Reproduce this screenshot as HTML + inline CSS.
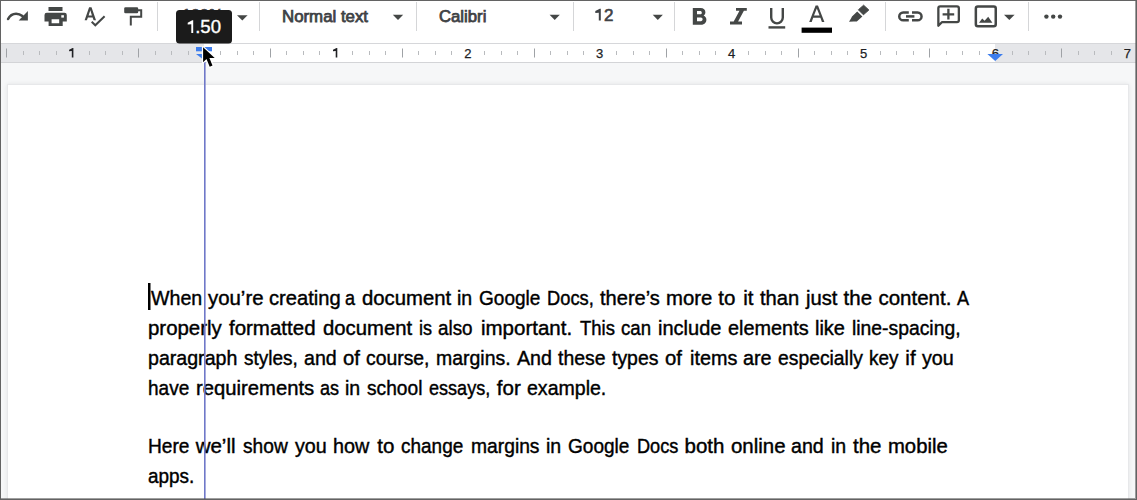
<!DOCTYPE html>
<html><head><meta charset="utf-8">
<style>
html,body{margin:0;padding:0;width:1137px;height:500px;overflow:hidden;background:#fff;}
body{position:relative;font-family:"Liberation Sans",sans-serif;}
.abs{position:absolute;}
#toolbar{left:0;top:0;width:1137px;height:43px;background:#fff;}
#ruler{left:0;top:43px;width:1137px;height:20px;background:#fff;border-top:1px solid #d6d7da;border-bottom:1px solid #d3d4d7;box-sizing:border-box;}
#canvas{left:0;top:63px;width:1137px;height:437px;background:#f6f7f8;}
#page{left:8px;top:85px;width:1120px;height:440px;background:#fff;box-shadow:0 0 0 1px #e7e8ea,0 0 4px 1px rgba(60,64,67,.10);}
.sep{position:absolute;top:2px;width:1px;height:29px;background:#d5d6d8;}
.tb{position:absolute;color:#444746;font-weight:normal;font-size:16px;white-space:nowrap;line-height:1;transform-origin:0 0;-webkit-text-stroke:0.75px #3f4245;color:#3f4245;}
.ln{position:absolute;left:148px;font-size:20.5px;color:#000;white-space:nowrap;line-height:1;transform-origin:0 0;-webkit-text-stroke:0.42px #000;}
.rn{position:absolute;font-size:12px;font-weight:bold;color:#3c4043;line-height:1;transform:translateX(-50%);}
#frame{left:0;top:0;width:1137px;height:500px;box-sizing:border-box;border:1px solid #636363;pointer-events:none;box-shadow:inset -1px -1px 0 rgba(80,80,80,.55);}
</style></head><body>
<div id="toolbar" class="abs"></div>
<div id="ruler" class="abs">
  <div class="abs" style="left:0;top:0;width:204px;height:18px;background:#e5e6e9"></div>
  <div class="abs" style="left:995px;top:0;width:142px;height:18px;background:#e5e6e9"></div>
</div>
<div id="canvas" class="abs"></div>
<div id="page" class="abs"></div>

<!-- separators -->
<div class="sep" style="left:157px"></div>
<div class="sep" style="left:259px"></div>
<div class="sep" style="left:416px"></div>
<div class="sep" style="left:573px"></div>
<div class="sep" style="left:674px"></div>
<div class="sep" style="left:885px"></div>
<div class="sep" style="left:1028px"></div>

<!-- toolbar text -->
<div class="tb" style="left:182px;top:8px">100%</div>
<div class="tb" style="left:282.2px;top:9px;transform:scaleX(1.052)">Normal text</div>
<div class="tb" style="left:438.6px;top:9px;transform:scaleX(1.045)">Calibri</div>


<!-- document text -->
<div class="ln" style="left:150.50px;top:288px;transform:scaleX(0.9575)">When</div>
<div class="ln" style="left:208.41px;top:288px;transform:scaleX(0.9944)">you’re</div>
<div class="ln" style="left:269.39px;top:288px;transform:scaleX(0.9829)">creating</div>
<div class="ln" style="left:345.49px;top:288px;transform:scaleX(0.8800)">a</div>
<div class="ln" style="left:361.80px;top:288px;transform:scaleX(0.9904)">document</div>
<div class="ln" style="left:457.42px;top:288px;transform:scaleX(0.9532)">in</div>
<div class="ln" style="left:478.90px;top:288px;transform:scaleX(0.9280)">Google</div>
<div class="ln" style="left:547.05px;top:288px;transform:scaleX(0.8921)">Docs,</div>
<div class="ln" style="left:599.68px;top:288px;transform:scaleX(0.9796)">there’s</div>
<div class="ln" style="left:666.13px;top:288px;transform:scaleX(0.9914)">more</div>
<div class="ln" style="left:718.35px;top:288px;transform:scaleX(1.0000)">to</div>
<div class="ln" style="left:743.16px;top:288px;transform:scaleX(1.0000)">it</div>
<div class="ln" style="left:760.10px;top:288px;transform:scaleX(0.9832)">than</div>
<div class="ln" style="left:805.58px;top:288px;transform:scaleX(0.9864)">just</div>
<div class="ln" style="left:843.58px;top:288px;transform:scaleX(1.0000)">the</div>
<div class="ln" style="left:878.47px;top:288px;transform:scaleX(1.0000)">content.</div>
<div class="ln" style="left:957.14px;top:288px;transform:scaleX(0.8827)">A</div>
<div class="ln" style="left:147.80px;top:318px;transform:scaleX(0.9962)">properly</div>
<div class="ln" style="left:228.95px;top:318px;transform:scaleX(1.0000)">formatted</div>
<div class="ln" style="left:323.18px;top:318px;transform:scaleX(0.9904)">document</div>
<div class="ln" style="left:419.42px;top:318px;transform:scaleX(0.8800)">is</div>
<div class="ln" style="left:438.43px;top:318px;transform:scaleX(0.9193)">also</div>
<div class="ln" style="left:480.96px;top:318px;transform:scaleX(1.0000)">important.</div>
<div class="ln" style="left:579.80px;top:318px;transform:scaleX(0.9022)">This</div>
<div class="ln" style="left:621.07px;top:318px;transform:scaleX(0.9088)">can</div>
<div class="ln" style="left:658.27px;top:318px;transform:scaleX(0.9763)">include</div>
<div class="ln" style="left:727.68px;top:318px;transform:scaleX(0.9688)">elements</div>
<div class="ln" style="left:815.43px;top:318px;transform:scaleX(0.9740)">like</div>
<div class="ln" style="left:852.01px;top:318px;transform:scaleX(0.9429)">line-spacing,</div>
<div class="ln" style="left:147.84px;top:348px;transform:scaleX(0.9557)">paragraph</div>
<div class="ln" style="left:243.87px;top:348px;transform:scaleX(0.9257)">styles,</div>
<div class="ln" style="left:303.66px;top:348px;transform:scaleX(0.9558)">and</div>
<div class="ln" style="left:342.63px;top:348px;transform:scaleX(0.9913)">of</div>
<div class="ln" style="left:366.47px;top:348px;transform:scaleX(0.9445)">course,</div>
<div class="ln" style="left:436.48px;top:348px;transform:scaleX(0.9490)">margins.</div>
<div class="ln" style="left:517.06px;top:348px;transform:scaleX(0.9579)">And</div>
<div class="ln" style="left:558.23px;top:348px;transform:scaleX(0.9479)">these</div>
<div class="ln" style="left:612.43px;top:348px;transform:scaleX(0.9476)">types</div>
<div class="ln" style="left:665.44px;top:348px;transform:scaleX(0.9913)">of</div>
<div class="ln" style="left:689.63px;top:348px;transform:scaleX(0.9662)">items</div>
<div class="ln" style="left:743.37px;top:348px;transform:scaleX(0.9652)">are</div>
<div class="ln" style="left:777.99px;top:348px;transform:scaleX(0.9425)">especially</div>
<div class="ln" style="left:869.36px;top:348px;transform:scaleX(0.9237)">key</div>
<div class="ln" style="left:905.37px;top:348px;transform:scaleX(1.0000)">if</div>
<div class="ln" style="left:922.40px;top:348px;transform:scaleX(0.9624)">you</div>
<div class="ln" style="left:147.87px;top:378px;transform:scaleX(0.9282)">have</div>
<div class="ln" style="left:195.69px;top:378px;transform:scaleX(0.9882)">requirements</div>
<div class="ln" style="left:319.57px;top:378px;transform:scaleX(0.8800)">as</div>
<div class="ln" style="left:344.83px;top:378px;transform:scaleX(0.9532)">in</div>
<div class="ln" style="left:367.21px;top:378px;transform:scaleX(0.9347)">school</div>
<div class="ln" style="left:428.92px;top:378px;transform:scaleX(0.8809)">essays,</div>
<div class="ln" style="left:496.86px;top:378px;transform:scaleX(1.0000)">for</div>
<div class="ln" style="left:527.32px;top:378px;transform:scaleX(0.9534)">example.</div>
<div class="ln" style="left:147.77px;top:436px;transform:scaleX(0.9323)">Here</div>
<div class="ln" style="left:195.63px;top:436px;transform:scaleX(1.0000)">we’ll</div>
<div class="ln" style="left:242.87px;top:436px;transform:scaleX(0.9343)">show</div>
<div class="ln" style="left:294.62px;top:436px;transform:scaleX(0.9624)">you</div>
<div class="ln" style="left:333.35px;top:436px;transform:scaleX(0.9649)">how</div>
<div class="ln" style="left:377.21px;top:436px;transform:scaleX(1.0000)">to</div>
<div class="ln" style="left:401.44px;top:436px;transform:scaleX(0.9262)">change</div>
<div class="ln" style="left:470.62px;top:436px;transform:scaleX(0.9395)">margins</div>
<div class="ln" style="left:546.25px;top:436px;transform:scaleX(0.9533)">in</div>
<div class="ln" style="left:568.10px;top:436px;transform:scaleX(0.9280)">Google</div>
<div class="ln" style="left:636.63px;top:436px;transform:scaleX(0.8860)">Docs</div>
<div class="ln" style="left:684.55px;top:436px;transform:scaleX(1.0000)">both</div>
<div class="ln" style="left:731.13px;top:436px;transform:scaleX(0.9967)">online</div>
<div class="ln" style="left:791.42px;top:436px;transform:scaleX(0.9558)">and</div>
<div class="ln" style="left:830.86px;top:436px;transform:scaleX(0.9533)">in</div>
<div class="ln" style="left:853.01px;top:436px;transform:scaleX(1.0000)">the</div>
<div class="ln" style="left:888.23px;top:436px;transform:scaleX(0.9879)">mobile</div>
<div class="ln" style="left:147.68px;top:466px;transform:scaleX(0.9233)">apps.</div>

<svg class="abs" style="left:0;top:0" width="1137" height="500" viewBox="0 0 1137 500">
<g fill="#444746">
<!-- redo -->
<path d="M8.1 19C9.7 15.7 12.7 13.7 16.1 13.7C18.5 13.7 20.5 14.5 22.4 16" fill="none" stroke="#444746" stroke-width="2.6" stroke-linecap="round"/><path d="M27.9 11.1V20.4H18.7Z"/>
<!-- print -->
<rect x="48.5" y="7" width="14" height="4"/>
<path fill-rule="evenodd" d="M44.5 15a2.3 2.3 0 0 1 2.3-2.3h17.7a2.3 2.3 0 0 1 2.3 2.3V21.6h-4.1V26h-14.1V21.6h-4.1zM51.6 19.2h7.6v4h-7.6z"/>
<rect x="61.3" y="15.2" width="2.6" height="2.4" fill="#fff"/>
<!-- paint format -->
<rect x="124.2" y="7.2" width="14" height="6" rx="1.3"/>
</g>
<g fill="none" stroke="#444746" stroke-width="2">
<!-- spellcheck -->
<path fill="#444746" stroke="none" fill-rule="evenodd" d="M84.6 20.2L89.1 7.2H91.5L96 20.2H93.6L92.6 17.5H87.9L86.9 20.2ZM88.6 15.4H91.9L90.3 10.3Z"/>
<path d="M91.7 21.8L95.3 25.3L104.6 16.2"/>
<!-- paint handle -->
<path d="M138 10.2H141.2V16.8H130.8V25.6"/>
<!-- underline U -->
<path d="M771.2 8V17.6A5.8 5.8 0 0 0 782.8 17.6V8" stroke-width="2.4"/>
<!-- text color A -->
<path fill="#444746" stroke="none" fill-rule="evenodd" d="M809.2 22L815.6 5.6H818L824.4 22H821.9L820.4 17.8H813.2L811.7 22ZM814 15.6H819.6L816.8 8.4Z"/>
<!-- link -->
<path d="M908.8 12.45H903.2a3.95 3.95 0 0 0 0 7.9H908.8" stroke-width="2.5"/>
<path d="M912 12.45H917.6a3.95 3.95 0 0 1 0 7.9H912" stroke-width="2.5"/>
<path d="M906 16.4H914.4" stroke-width="2.5"/>
<!-- comment -->
<path d="M938.35 25.8V8.2a1.85 1.85 0 0 1 1.85-1.85H957a1.85 1.85 0 0 1 1.85 1.85V20.2a1.85 1.85 0 0 1-1.85 1.85H942.1Z" stroke-width="2.3" stroke-linejoin="round"/>
<path d="M948.4 8.8V19.6M942.6 14.3H954.2" stroke-width="2.3"/>
<!-- image -->
<rect x="975.85" y="6.45" width="19.9" height="19.9" rx="2" stroke-width="2.5"/>
</g>
<g fill="#444746">
<!-- dropdown arrows -->
<path d="M237 15.3H247.6L242.3 20.5z"/>
<path d="M392.8 14.8H403.2L398 20z"/>
<path d="M549.6 14.8H559.8L554.7 20z"/>
<path d="M652.7 14.8H662.9L657.8 20z"/>
<path d="M1004 14.8H1014.6L1009.3 20z"/>
<!-- bold -->
<path fill-rule="evenodd" d="M692.8 8H700.6C703.6 8 705.4 9.9 705.4 12.2C705.4 13.6 704.7 14.8 703.6 15.6C705.3 16.3 706.4 17.9 706.4 19.8C706.4 22.6 704.3 24.8 701.2 24.8H692.8ZM697 11.1H700.2C701.1 11.1 701.8 11.8 701.8 12.7C701.8 13.6 701.1 14.3 700.2 14.3H697ZM697 17.5H700.9C701.9 17.5 702.6 18.3 702.6 19.35C702.6 20.4 701.9 21.2 700.9 21.2H697Z"/>
<!-- italic -->
<path d="M736 8H746.8V10.8H743.9L738.1 21.6H742V24.4H730V21.6H733.7L739.5 10.8H736Z"/>
<!-- underline bar -->
<rect x="768.5" y="26.2" width="16.7" height="2.4"/>
<!-- highlighter -->
<path d="M863.6 5.2L868.8 10L863.4 14.8L858.4 9.8Z" stroke="#444746" stroke-width="1" stroke-linejoin="round"/>
<path d="M857.2 11.4L862.4 16.4L856.8 21.4L853.6 21.6L849 21.8L851 18.6L852 16.6Z"/>
<!-- comment tail fill -->
<!-- image mountains -->
<path d="M979 22.8L982.2 18.4L984.6 20.8L988.2 16.8L992.4 22.8Z"/>
<!-- more dots -->
<circle cx="1046.4" cy="16.6" r="2.2"/>
<circle cx="1053.2" cy="16.6" r="2.2"/>
<circle cx="1060" cy="16.6" r="2.2"/>
</g>
<rect x="801.6" y="27.6" width="30.4" height="5.2" fill="#000"/>
<path d="M600.80 8.7V20.6H598.80V12.81L595.30 13.00V11.10L599.80 8.7Z" fill="#3f4245"/><text x="613.4" y="20.6" text-anchor="end" font-family="Liberation Sans" font-size="17" fill="#3f4245" stroke="#3f4245" stroke-width="0.6">2</text>
<!-- ruler -->
<rect x="6" y="48.5" width="1" height="9" fill="#9fa2a6"/>
<rect x="23" y="51" width="1" height="4" fill="#b9bbbe"/>
<rect x="39" y="51" width="1" height="4" fill="#b9bbbe"/>
<rect x="56" y="51" width="1" height="4" fill="#b9bbbe"/>
<rect x="89" y="51" width="1" height="4" fill="#b9bbbe"/>
<rect x="105" y="51" width="1" height="4" fill="#b9bbbe"/>
<rect x="122" y="51" width="1" height="4" fill="#b9bbbe"/>
<rect x="138" y="48.5" width="1" height="9" fill="#9fa2a6"/>
<rect x="155" y="51" width="1" height="4" fill="#b9bbbe"/>
<rect x="171" y="51" width="1" height="4" fill="#b9bbbe"/>
<rect x="188" y="51" width="1" height="4" fill="#b9bbbe"/>
<rect x="220" y="51" width="1" height="4" fill="#b9bbbe"/>
<rect x="237" y="51" width="1" height="4" fill="#b9bbbe"/>
<rect x="253" y="51" width="1" height="4" fill="#b9bbbe"/>
<rect x="270" y="48.5" width="1" height="9" fill="#9fa2a6"/>
<rect x="286" y="51" width="1" height="4" fill="#b9bbbe"/>
<rect x="303" y="51" width="1" height="4" fill="#b9bbbe"/>
<rect x="319" y="51" width="1" height="4" fill="#b9bbbe"/>
<rect x="352" y="51" width="1" height="4" fill="#b9bbbe"/>
<rect x="369" y="51" width="1" height="4" fill="#b9bbbe"/>
<rect x="385" y="51" width="1" height="4" fill="#b9bbbe"/>
<rect x="402" y="48.5" width="1" height="9" fill="#9fa2a6"/>
<rect x="418" y="51" width="1" height="4" fill="#b9bbbe"/>
<rect x="435" y="51" width="1" height="4" fill="#b9bbbe"/>
<rect x="451" y="51" width="1" height="4" fill="#b9bbbe"/>
<rect x="484" y="51" width="1" height="4" fill="#b9bbbe"/>
<rect x="501" y="51" width="1" height="4" fill="#b9bbbe"/>
<rect x="517" y="51" width="1" height="4" fill="#b9bbbe"/>
<rect x="534" y="48.5" width="1" height="9" fill="#9fa2a6"/>
<rect x="550" y="51" width="1" height="4" fill="#b9bbbe"/>
<rect x="567" y="51" width="1" height="4" fill="#b9bbbe"/>
<rect x="583" y="51" width="1" height="4" fill="#b9bbbe"/>
<rect x="616" y="51" width="1" height="4" fill="#b9bbbe"/>
<rect x="633" y="51" width="1" height="4" fill="#b9bbbe"/>
<rect x="649" y="51" width="1" height="4" fill="#b9bbbe"/>
<rect x="666" y="48.5" width="1" height="9" fill="#9fa2a6"/>
<rect x="682" y="51" width="1" height="4" fill="#b9bbbe"/>
<rect x="699" y="51" width="1" height="4" fill="#b9bbbe"/>
<rect x="715" y="51" width="1" height="4" fill="#b9bbbe"/>
<rect x="748" y="51" width="1" height="4" fill="#b9bbbe"/>
<rect x="765" y="51" width="1" height="4" fill="#b9bbbe"/>
<rect x="781" y="51" width="1" height="4" fill="#b9bbbe"/>
<rect x="798" y="48.5" width="1" height="9" fill="#9fa2a6"/>
<rect x="814" y="51" width="1" height="4" fill="#b9bbbe"/>
<rect x="831" y="51" width="1" height="4" fill="#b9bbbe"/>
<rect x="847" y="51" width="1" height="4" fill="#b9bbbe"/>
<rect x="880" y="51" width="1" height="4" fill="#b9bbbe"/>
<rect x="896" y="51" width="1" height="4" fill="#b9bbbe"/>
<rect x="913" y="51" width="1" height="4" fill="#b9bbbe"/>
<rect x="929" y="48.5" width="1" height="9" fill="#9fa2a6"/>
<rect x="946" y="51" width="1" height="4" fill="#b9bbbe"/>
<rect x="962" y="51" width="1" height="4" fill="#b9bbbe"/>
<rect x="979" y="51" width="1" height="4" fill="#b9bbbe"/>
<rect x="1012" y="51" width="1" height="4" fill="#b9bbbe"/>
<rect x="1028" y="51" width="1" height="4" fill="#b9bbbe"/>
<rect x="1045" y="51" width="1" height="4" fill="#b9bbbe"/>
<rect x="1061" y="48.5" width="1" height="9" fill="#9fa2a6"/>
<rect x="1078" y="51" width="1" height="4" fill="#b9bbbe"/>
<rect x="1094" y="51" width="1" height="4" fill="#b9bbbe"/>
<rect x="1111" y="51" width="1" height="4" fill="#b9bbbe"/>
<g font-family="Liberation Sans">
<path d="M73.40 48V57.6H71.80V51.05L69.10 51.20V49.70L72.60 48Z" fill="#202124"/>
<path d="M337.30 48V57.6H335.70V51.05L333.00 51.20V49.70L336.50 48Z" fill="#202124"/>
<text x="467.8" y="57.5" text-anchor="middle" font-size="13" fill="#202124" stroke="#202124" stroke-width="0.25">2</text>
<text x="599.7" y="57.5" text-anchor="middle" font-size="13" fill="#202124" stroke="#202124" stroke-width="0.25">3</text>
<text x="731.6" y="57.5" text-anchor="middle" font-size="13" fill="#202124" stroke="#202124" stroke-width="0.25">4</text>
<text x="863.5" y="57.5" text-anchor="middle" font-size="13" fill="#202124" stroke="#202124" stroke-width="0.25">5</text>
<text x="995.4" y="57.5" text-anchor="middle" font-size="13" fill="#202124" stroke="#202124" stroke-width="0.25">6</text>
<text x="1127.3" y="57.5" text-anchor="middle" font-size="13" fill="#202124" stroke="#202124" stroke-width="0.25">7</text>
</g>
<!-- indent markers -->
<rect x="196" y="47" width="16" height="4.3" fill="#3d7ded"/>
<path d="M196 53.9H212L204 60Z" fill="#3d7ded"/>
<path d="M987.4 54.1H1003L995.2 61Z" fill="#3d7ded"/>
<!-- guide line -->
<rect x="204" y="62" width="1.6" height="438" fill="#6f78c8"/>
<!-- text cursor -->
<rect x="148" y="283" width="2.5" height="27" fill="#000"/>
<!-- tooltip -->
<rect x="176" y="10" width="56" height="33.4" rx="3.5" fill="#1b1b1b"/>
<path d="M193.20 20.25V33H191.30V24.37L187.70 24.55V22.75L192.25 20.25Z" fill="#fff"/><text x="221" y="33" text-anchor="end" font-family="Liberation Sans" font-size="18.6" fill="#fff" stroke="#fff" stroke-width="0.35">.50</text>
<!-- mouse cursor -->
<path d="M203.1 47.3V62.2L206.5 59.1L209.7 66.8L212.5 65.5L209.4 58H214.7Z" fill="#fff" stroke="#fff" stroke-width="2.4" stroke-linejoin="round"/><path d="M203.1 47.3V62.2L206.5 59.1L209.7 66.8L212.5 65.5L209.4 58H214.7Z" fill="#000"/>
</svg>

<div id="frame" class="abs"></div>
</body></html>
